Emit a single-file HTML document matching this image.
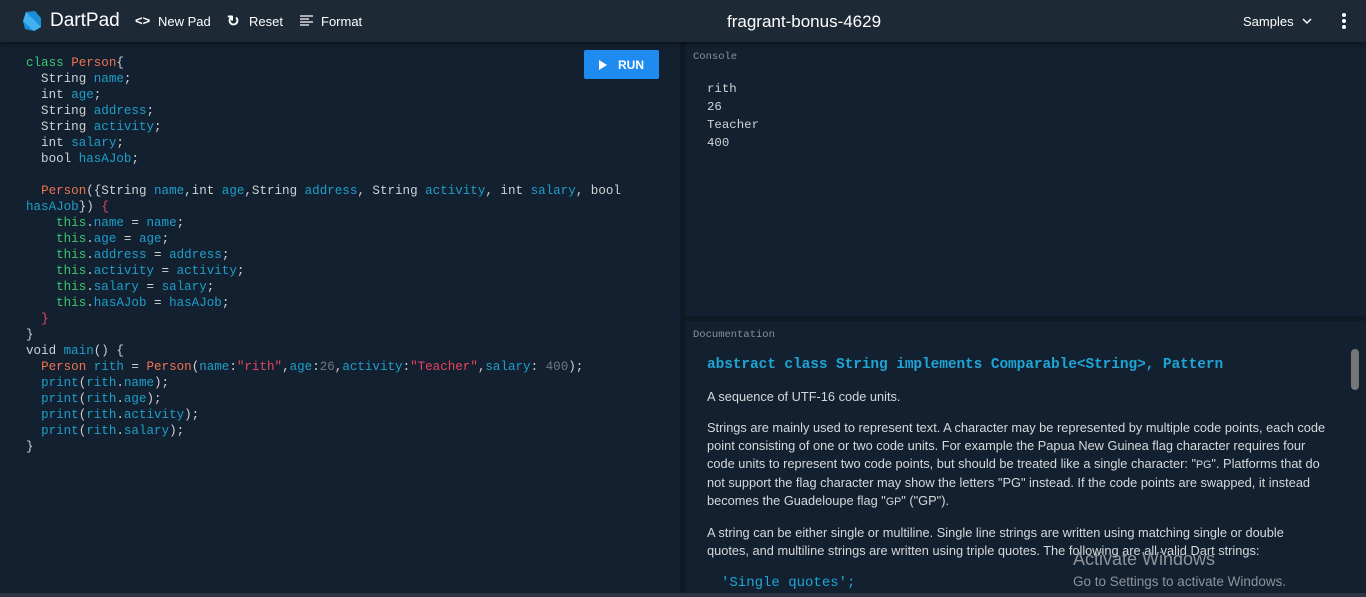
<!DOCTYPE html>
<html style="overflow:hidden;height:597px"><head><meta charset="utf-8"><style>
*{margin:0;padding:0;box-sizing:border-box}
body{width:1366px;height:597px;overflow:hidden;background:#13202f;font-family:"Liberation Sans",sans-serif;position:relative;color:#ddd}
.hdr{position:absolute;left:0;top:0;width:1366px;height:42px;background:#1e2936;box-shadow:0 2px 4px rgba(0,0,0,.4);z-index:2}
.hdr .t{position:absolute;color:#fff;font-size:13px;top:14px}
.code{position:absolute;left:26px;top:55px;font-family:"Liberation Mono",monospace;font-size:12.55px;line-height:16px;color:#cfd2d6;white-space:pre}
.k{color:#3cc475}.c{color:#f2714f}.i{color:#1e9fca}.s{color:#e8445f}.n{color:#6d7a86}.r{color:#e8445f}
.run{position:absolute;left:584px;top:50px;width:75px;height:29px;background:#1e8bf1;border-radius:2px;color:#fff;font-size:12px;font-weight:bold}
.vd{position:absolute;left:680px;top:42px;width:6px;height:551px;background:#0f1a25}
.hd{position:absolute;left:686px;top:316px;width:680px;height:5px;background:#0f1a25}
.lbl{position:absolute;font-family:"Liberation Mono",monospace;font-size:10.5px;color:#8a9199}
.con{position:absolute;left:707px;top:80px;font-family:"Liberation Mono",monospace;font-size:12.4px;line-height:18px;color:#d0d3d6;white-space:pre}
.docwrap{position:absolute;left:686px;top:321px;width:680px;height:272px;overflow:hidden}
.doc{position:absolute;left:21px;top:35px;width:622px;font-size:12.8px;line-height:18px;color:#d5d8db}
.doc p{margin-bottom:13px}
.doc h{display:block;font-family:"Liberation Mono",monospace;font-weight:bold;color:#1ea5d6;font-size:14.5px;margin-bottom:14px;letter-spacing:-.1px}
.bot{position:absolute;left:0;top:593px;width:1366px;height:4px;background:#2b3541}
</style></head><body>
<div class="hdr">
<svg style="position:absolute;left:22px;top:10px" width="20" height="22" viewBox="0 0 20 22"><path d="M4 2 L13 1 L19 8 L19 17 L12 21 L3 19 L1 11 Z" fill="#1a8fd8"/><path d="M4 2 L19 17 L12 21 L1 11 Z" fill="#43b1f0"/></svg>
<span class="t" style="left:50px;top:10px;font-size:19px">DartPad</span>
<span class="t" style="left:135px;top:13px;font-weight:bold">&lt;&gt;</span>
<span class="t" style="left:158px">New Pad</span>
<span class="t" style="left:227px;top:12px;font-size:15px;font-weight:bold">↻</span>
<span class="t" style="left:249px">Reset</span>
<svg style="position:absolute;left:300px;top:15px" width="13" height="12"><path d="M0 1H13M0 4H9M0 7H13M0 10H9" stroke="#fff" stroke-width="1.3"/></svg>
<span class="t" style="left:321px">Format</span>
<span class="t" style="left:727px;top:12px;font-size:17px">fragrant-bonus-4629</span>
<span class="t" style="left:1243px">Samples</span>
<svg style="position:absolute;left:1302px;top:18px" width="10" height="7"><path d="M1 1L5 5L9 1" stroke="#fff" stroke-width="1.5" fill="none"/></svg>
<svg style="position:absolute;left:1341px;top:12px" width="6" height="18"><circle cx="3" cy="3" r="2" fill="#fff"/><circle cx="3" cy="9" r="2" fill="#fff"/><circle cx="3" cy="15" r="2" fill="#fff"/></svg>
</div>
<div class="code"><span class="k">class</span> <span class="c">Person</span>{
  String <span class="i">name</span>;
  int <span class="i">age</span>;
  String <span class="i">address</span>;
  String <span class="i">activity</span>;
  int <span class="i">salary</span>;
  bool <span class="i">hasAJob</span>;

  <span class="c">Person</span>({String <span class="i">name</span>,int <span class="i">age</span>,String <span class="i">address</span>, String <span class="i">activity</span>, int <span class="i">salary</span>, bool
<span class="i">hasAJob</span>}) <span class="r">{</span>
    <span class="k">this</span>.<span class="i">name</span> = <span class="i">name</span>;
    <span class="k">this</span>.<span class="i">age</span> = <span class="i">age</span>;
    <span class="k">this</span>.<span class="i">address</span> = <span class="i">address</span>;
    <span class="k">this</span>.<span class="i">activity</span> = <span class="i">activity</span>;
    <span class="k">this</span>.<span class="i">salary</span> = <span class="i">salary</span>;
    <span class="k">this</span>.<span class="i">hasAJob</span> = <span class="i">hasAJob</span>;
  <span class="r">}</span>
}
void <span class="i">main</span>() {
  <span class="c">Person</span> <span class="i">rith</span> = <span class="c">Person</span>(<span class="i">name</span>:<span class="s">"rith"</span>,<span class="i">age</span>:<span class="n">26</span>,<span class="i">activity</span>:<span class="s">"Teacher"</span>,<span class="i">salary</span>: <span class="n">400</span>);
  <span class="i">print</span>(<span class="i">rith</span>.<span class="i">name</span>);
  <span class="i">print</span>(<span class="i">rith</span>.<span class="i">age</span>);
  <span class="i">print</span>(<span class="i">rith</span>.<span class="i">activity</span>);
  <span class="i">print</span>(<span class="i">rith</span>.<span class="i">salary</span>);
}</div>
<div class="run"><svg style="position:absolute;left:15px;top:10px" width="8" height="10"><path d="M0 0L8 5L0 10Z" fill="#fff"/></svg><span style="position:absolute;left:34px;top:8px">RUN</span></div>
<div class="vd"></div><div class="hd"></div>
<div class="lbl" style="left:693px;top:51px">Console</div>
<div class="con">rith
26
Teacher
400</div>
<div class="lbl" style="left:693px;top:329px">Documentation</div>
<div class="docwrap"><div class="doc">
<h>abstract class String implements Comparable&lt;String&gt;, Pattern</h>
<p>A sequence of UTF-16 code units.</p>
<p>Strings are mainly used to represent text. A character may be represented by multiple code points, each code point consisting of one or two code units. For example the Papua New Guinea flag character requires four code units to represent two code points, but should be treated like a single character: "<small>PG</small>". Platforms that do not support the flag character may show the letters "PG" instead. If the code points are swapped, it instead becomes the Guadeloupe flag "<small>GP</small>" ("GP").</p>
<p>A string can be either single or multiline. Single line strings are written using matching single or double quotes, and multiline strings are written using triple quotes. The following are all valid Dart strings:</p>
<div style="font-family:'Liberation Mono',monospace;font-size:14px;color:#1ea5d6;margin-left:14px;line-height:20px">'Single quotes';<br>"Double quotes";</div>
</div></div>
<div style="position:absolute;left:1351px;top:349px;width:8px;height:41px;background:#777;border-radius:4px"></div>
<div style="position:absolute;left:1073px;top:549px;font-size:18px;color:#8d939a">Activate Windows</div>
<div style="position:absolute;left:1073px;top:574px;font-size:13.5px;color:#8d939a">Go to Settings to activate Windows.</div>
<div class="bot"></div>
</body></html>
